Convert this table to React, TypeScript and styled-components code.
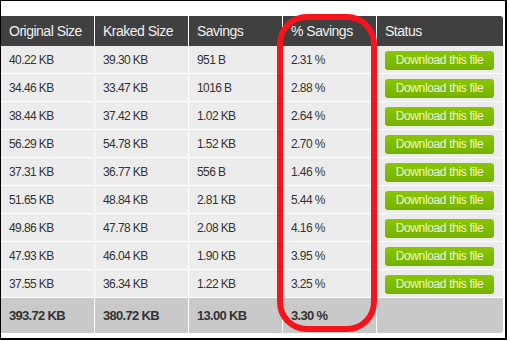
import React from "react";
import styled, { createGlobalStyle } from "styled-components";

const rows = [
  ["40.22 KB", "39.30 KB", "951 B", "2.31 %"],
  ["34.46 KB", "33.47 KB", "1016 B", "2.88 %"],
  ["38.44 KB", "37.42 KB", "1.02 KB", "2.64 %"],
  ["56.29 KB", "54.78 KB", "1.52 KB", "2.70 %"],
  ["37.31 KB", "36.77 KB", "556 B", "1.46 %"],
  ["51.65 KB", "48.84 KB", "2.81 KB", "5.44 %"],
  ["49.86 KB", "47.78 KB", "2.08 KB", "4.16 %"],
  ["47.93 KB", "46.04 KB", "1.90 KB", "3.95 %"],
  ["37.55 KB", "36.34 KB", "1.22 KB", "3.25 %"],
];

const totals = ["393.72 KB", "380.72 KB", "13.00 KB", "3.30 %"];
const headers = ["Original Size", "Kraked Size", "Savings", "% Savings", "Status"];

const GlobalStyle = createGlobalStyle`
  body {
    margin: 0;
    background: #fff;
    font-family: "Liberation Sans", Arial, sans-serif;
  }
`;

const App = () => {
  return (
    <>
      <GlobalStyle />
      <SFrame>
        <STable>
          <SHeadRow>
            {headers.map((h) => (
              <SHeadCell key={h}>{h}</SHeadCell>
            ))}
          </SHeadRow>
          <SBody>
            {rows.map((r) => (
              <SRow key={r[0]}>
                {r.map((c, i) => (
                  <SCell key={i}>{c}</SCell>
                ))}
                <SCell>
                  <SButton>Download this file</SButton>
                </SCell>
              </SRow>
            ))}
            <SFootRow>
              {totals.map((t) => (
                <SFootCell key={t}>{t}</SFootCell>
              ))}
              <SFootCell />
            </SFootRow>
          </SBody>
        </STable>
        <SHighlight />
      </SFrame>
    </>
  );
};

const SFrame = styled.div`
  position: relative;
  box-sizing: border-box;
  width: 507px;
  height: 340px;
  border-style: solid;
  border-color: #000;
  border-width: 1px 2px 2px 1px;
  padding-top: 15px;
  background: #fff;
`;

const STable = styled.div`
  width: 502px;
  display: flex;
  flex-direction: column;
`;

const SRowBase = styled.div`
  display: grid;
  grid-template-columns: 93px 93px 93px 93px 126px;
  column-gap: 1px;
`;

const SHeadRow = styled(SRowBase)`
  height: 30px;
  & > div:last-child {
    border-top-right-radius: 3px;
  }
`;

const SHeadCell = styled.div`
  display: flex;
  align-items: center;
  padding-left: 8px;
  background: #404040;
  color: #f0f0f0;
  font-size: 14px;
  letter-spacing: -0.5px;
`;

const SBody = styled.div`
  display: flex;
  flex-direction: column;
  gap: 1px;
`;

const SRow = styled(SRowBase)`
  height: 27px;
`;

const SCell = styled.div`
  display: flex;
  align-items: center;
  padding-left: 8px;
  padding-top: 1px;
  background: #ececec;
  color: #333;
  font-size: 12px;
  letter-spacing: -0.6px;
`;

const SFootRow = styled(SRowBase)`
  height: 35px;
  & > div:last-child {
    border-bottom-right-radius: 3px;
  }
`;

const SFootCell = styled.div`
  display: flex;
  align-items: center;
  padding-left: 8px;
  background: #c9c9c9;
  color: #333;
  font-size: 13px;
  font-weight: bold;
  letter-spacing: -0.7px;
`;

const SButton = styled.div`
  box-sizing: border-box;
  width: 109px;
  height: 19px;
  display: flex;
  align-items: center;
  justify-content: center;
  border-radius: 3px;
  background: linear-gradient(#89c600, #74b200);
  color: #eef7dc;
  font-size: 12px;
  letter-spacing: -0.35px;
`;

const SHighlight = styled.div`
  position: absolute;
  left: 276px;
  top: 13px;
  width: 100px;
  height: 318px;
  box-sizing: border-box;
  border: 6px solid #f5141c;
  border-radius: 30px;
  pointer-events: none;
`;

export default App;
